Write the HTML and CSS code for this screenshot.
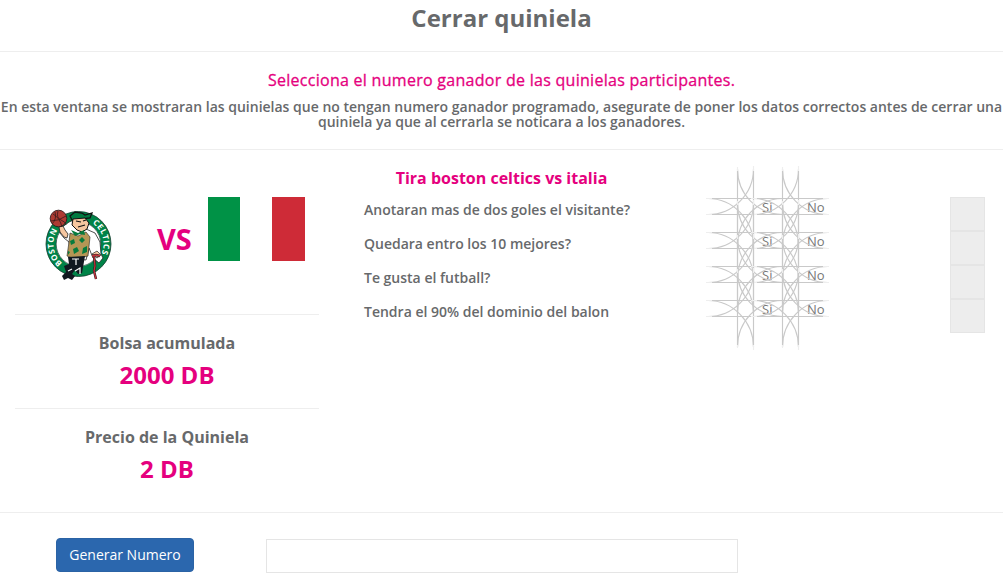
FILE: index.html
```html
<!DOCTYPE html>
<html lang="es">
<head>
<meta charset="utf-8">
<title>Cerrar quiniela</title>
<link rel="stylesheet" href="styles.css">
</head>
<body>
<svg class="defs" aria-hidden="true">
  <defs>
    <symbol id="star" viewBox="0 0 80 84" overflow="visible">
      <g fill="none" stroke="#c9c9c9" stroke-width="1.150">
        <path d="M32.500 6V78M48.500 6V78M7 33.500H73M7 49.500H73"/>
        <path d="M48.500 4C48.500 29 28 49.500 3 49.500M32.500 4C32.500 29 52 49.500 78 49.500M3 33.500C28 33.500 48.500 55 48.500 80M78 33.500C52 33.500 32.500 55 32.500 80"/>
        <path stroke="#eee" d="M32.500 2V6M48.500 1V6M32.500 78V81M48.500 78V83M1 33.500H7M1 49.500H7M73 33.500H79M73 49.500H79"/>
      </g>
    </symbol>
  </defs>
</svg>
<header class="title"><h1>Cerrar quiniela</h1></header>
<section class="intro">
  <h2>Selecciona el numero ganador de las quinielas participantes.</h2>
  <p>En esta ventana se mostraran las quinielas que no tengan numero ganador programado, asegurate de poner los datos correctos antes de cerrar una quiniela ya que al cerrarla se noticara a los ganadores.</p>
</section>
<main class="pool">
  <aside class="summary">
    <div class="teams">
      <svg class="celtics" viewBox="0 0 70 76">
        <defs>
          <path id="left-arc" d="M18.400 57.200A25 25 0 0 1 14 23.700"/>
          <path id="right-arc" d="M48.500 17.300A25 25 0 0 1 57.200 48.600"/>
        </defs>
        <circle cx="34.500" cy="38" r="27.500" fill="#fff" stroke="#008348" stroke-width="10"/>
        <circle cx="34.500" cy="38" r="32.500" fill="none" stroke="#173d30" stroke-width=".8"/>
        <circle cx="34.500" cy="38" r="22.300" fill="none" stroke="#173d30" stroke-width=".7"/>
        <path d="M17 22l8-6 5-2 4 8 8 1 9 4 5 9 1 12 2 4-4 5-6-5-4-10-3 12-15-2-2-16-5-4-4-5z" fill="#fff" stroke="#222" stroke-width=".8"/>
        <path d="M26 10l5-4 7 1 3 2 7-2-2 5-18 2z" fill="#007a40" stroke="#111" stroke-width="1.300"/>
        <path d="M29 13l12-1 4 5-2 6-5 3-5-2-5-5z" fill="#f6c69f" stroke="#111" stroke-width="1"/>
        <path d="M32 15l5 1m2-1l3-1M34 21l7-2" stroke="#111" stroke-width="1.200"/>
        <path d="M26 27l8 3 8-4 4 5-2 19-13 3-8-3 2-14z" fill="#b59655" stroke="#222" stroke-width=".6"/>
        <path d="M27 24l7 3 6-3 1 5-5-1-5 2zM26 35l4-2 1 4-4 2zM35 34l3-3 3 3-3 3zM29 43l4-2 2 4-5 3zM39 42l4-2v6l-5 2zM24 45l2 1-2 3z" fill="#087b3d"/>
        <path d="M15 21l4-1 2 4 3 4-1 4-3-1-4-5z" fill="#f6c69f" stroke="#222" stroke-width=".8"/>
        <path d="M24 51l17-1-3 17-4 1-3-4-3 4 3 2-3 4-4-2-4 2-2-4 4-4-2-6 5-2z" fill="#111820"/>
        <path d="M28 53h7M32 53v6M31 65l5-3v6M24 65l4-2" fill="none" stroke="#fff" stroke-width="1.200"/>
        <path d="M48 48l5-3 4 4-4 3z" fill="#f6c69f" stroke="#222" stroke-width=".7"/>
        <path d="M48 50l4-1 4 1M50 50l1 10-1 5 2 8" fill="none" stroke="#231b20" stroke-width="2.400"/>
        <path d="M48 50l4-1 4 1M50 50l1 10-1 5 2 8" fill="none" stroke="#c4343b" stroke-width="1.300"/>
        <text class="ring-text"><textPath href="#left-arc" textLength="36">BOSTON</textPath></text>
        <text class="ring-text"><textPath href="#right-arc" textLength="34">CELTICS</textPath></text>
        <circle cx="14.500" cy="12.500" r="8.300" fill="#ad3b33" stroke="#301a1b" stroke-width=".9"/>
        <path d="M7 15q8 0 15-5M9 8q7 4 9 13M14 5q-2 7 3 9t5 5M8 18q5-5 3-12" fill="none" stroke="#351a1b" stroke-width=".8"/>
      </svg>
      <span class="versus">VS</span>
      <div class="flag"><i class="green"></i><i class="white"></i><i class="red"></i></div>
    </div>
    <div class="stat"><h3>Bolsa acumulada</h3><strong>2000 DB</strong></div>
    <div class="stat"><h3>Precio de la Quiniela</h3><strong>2 DB</strong></div>
  </aside>
  <section class="questions">
    <h3>Tira boston celtics vs italia</h3>
    <ul>
      <li>Anotaran mas de dos goles el visitante?</li>
      <li>Quedara entro los 10 mejores?</li>
      <li>Te gusta el futball?</li>
      <li>Tendra el 90% del dominio del balon</li>
    </ul>
  </section>
  <div class="answers">
    <div class="answer"><span class="option"><svg class="star"><use href="#star"/></svg>Si</span><span class="option"><svg class="star"><use href="#star"/></svg>No</span></div>
    <div class="answer"><span class="option"><svg class="star"><use href="#star"/></svg>Si</span><span class="option"><svg class="star"><use href="#star"/></svg>No</span></div>
    <div class="answer"><span class="option"><svg class="star"><use href="#star"/></svg>Si</span><span class="option"><svg class="star"><use href="#star"/></svg>No</span></div>
    <div class="answer"><span class="option"><svg class="star"><use href="#star"/></svg>Si</span><span class="option"><svg class="star"><use href="#star"/></svg>No</span></div>
  </div>
  <div class="results"><i></i><i></i><i></i><i></i></div>
</main>
<footer class="actions">
  <button class="generate">Generar Numero</button>
  <input class="number" type="text" aria-label="Numero">
</footer>
</body>
</html>
```

FILE: styles.css
```css
* { box-sizing: border-box; }
body { margin: 0; height: 587px; overflow: hidden; background: #fff; color: #67696b; font-family: "Open Sans", sans-serif; }
h1, h2, h3, p, ul { margin: 0; padding: 0; }
.defs { display: block; width: 0; height: 0; }
.title { height: 52px; border-bottom: 1px solid #eee; text-align: center; }
h1 { font-size: 24px; line-height: 36px; font-weight: 700; }
.intro { height: 98px; padding-top: 19px; border-bottom: 1px solid #eee; text-align: center; }
h2 { color: #e5007e; font-size: 16px; line-height: 18px; font-weight: 500; letter-spacing: .28px; -webkit-text-stroke: .3px #e5007e; }
.intro p { margin-top: 10px; font-size: 14px; line-height: 15px; font-weight: 600; }
.pool { display: flex; height: 363px; border-bottom: 1px solid #eee; }
.summary { width: 304px; margin-left: 15px; text-align: center; }
.teams { display: flex; height: 164px; padding: 47px 14px 0 29px; }
.celtics { width: 70px; height: 76px; margin-top: 9px; flex: none; }
.ring-text { fill: #fff; font-size: 8px; font-weight: 700; }
.versus { width: 79px; padding: 23px 0 0 43px; color: #e5007e; font-size: 29px; line-height: 38px; font-weight: 700; text-align: left; flex: none; }
.flag { display: flex; width: 97px; height: 64px; margin-left: 15px; flex: none; }
.flag i { width: 32px; }
.flag .green { background: #009246; }
.flag .red { width: 33px; background: #ce2b37; }
.stat { height: 94px; padding-top: 19px; border-top: 1px solid #eee; }
.stat h3 { font-size: 16px; line-height: 18px; font-weight: 700; }
.stat strong { display: block; margin-top: 9px; color: #e5007e; font-size: 24px; line-height: 27px; font-weight: 700; }
.questions { width: 275px; margin-left: 45px; padding-top: 19px; }
.questions h3 { color: #e5007e; font-size: 16px; line-height: 18px; text-align: center; }
.questions ul { margin-top: 6px; list-style: none; }
.questions li { height: 34px; font-size: 14px; line-height: 34px; font-weight: 600; }
.answers { width: 96px; margin-left: 98px; padding-top: 40px; }
.answer { display: flex; height: 34px; }
.option { position: relative; width: 45px; padding-left: 25px; font-size: 13px; line-height: 34px; color: #777; }
.star { position: absolute; left: -32px; top: -25px; width: 80px; height: 84px; overflow: visible; }
.results { width: 35px; margin: 47px 0 0 117px; }
.results i { display: block; height: 34px; background: #ededed; border: 1px solid #e5e5e5; }
.actions { display: flex; padding: 25px 56px; }
.generate { width: 138px; height: 34px; padding: 0 0 2px; border: 1px solid #2b63a5; border-radius: 4px; background: #2b67ae; color: #fff; font: 500 14px "Open Sans", sans-serif; }
.number { width: 472px; height: 34px; margin: 1px 0 0 72px; border: 1px solid #e5e5e5; background: #fff; }
```
